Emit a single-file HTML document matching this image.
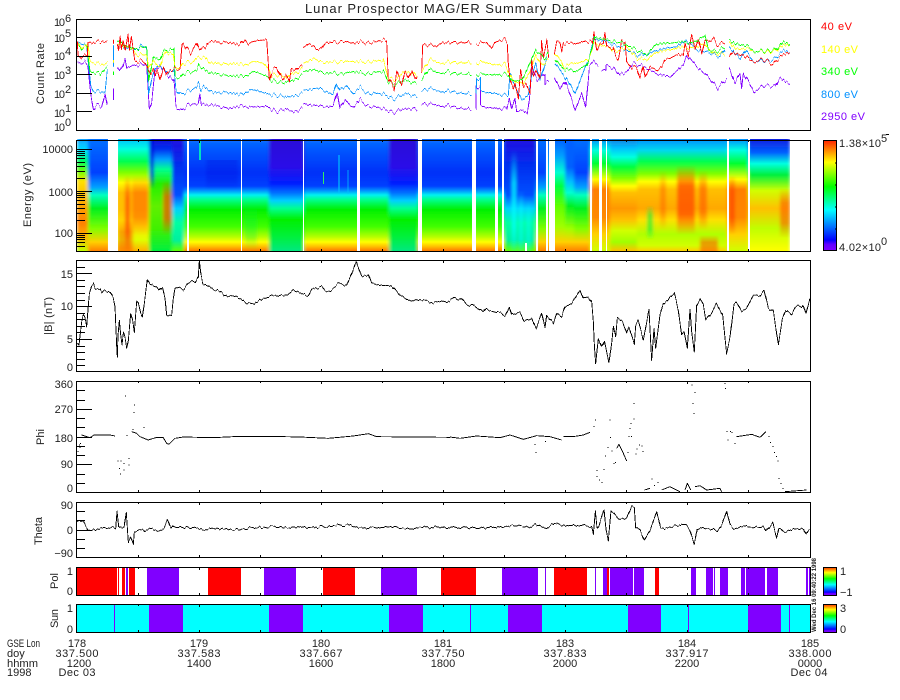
<!DOCTYPE html>
<html><head><meta charset="utf-8"><title>Lunar Prospector MAG/ER Summary Data</title>
<style>html,body{margin:0;padding:0;background:#fff;width:900px;height:700px;overflow:hidden}svg{display:block}text{font-family:"Liberation Sans",sans-serif;font-size:11px;fill:#222}.c{text-anchor:middle}.r{text-anchor:end}</style></head><body>
<svg width="900" height="700" viewBox="0 0 900 700" xmlns="http://www.w3.org/2000/svg">
<defs>
<linearGradient id="rb" x1="0" y1="1" x2="0" y2="0"><stop offset="0" stop-color="#8000ff"/><stop offset=".06" stop-color="#6000ff"/><stop offset=".1" stop-color="#0000ff"/><stop offset=".2" stop-color="#0060ff"/><stop offset=".37" stop-color="#00ffff"/><stop offset=".58" stop-color="#00ff00"/><stop offset=".8" stop-color="#ffff00"/><stop offset=".9" stop-color="#ff9000"/><stop offset="1" stop-color="#ff2000"/></linearGradient>
<linearGradient id="gA" x1="0" y1="0" x2="0" y2="1"><stop offset="0" stop-color="#0a70ff"/><stop offset=".09" stop-color="#0058ff"/><stop offset=".3" stop-color="#0030f8"/><stop offset=".42" stop-color="#0040ff"/><stop offset=".46" stop-color="#0090ff"/><stop offset=".5" stop-color="#00f0f0"/><stop offset=".54" stop-color="#00ff90"/><stop offset=".63" stop-color="#00f000"/><stop offset=".78" stop-color="#40ff00"/><stop offset=".87" stop-color="#b0ff00"/><stop offset=".92" stop-color="#ffff00"/><stop offset=".96" stop-color="#ffc000"/><stop offset="1" stop-color="#ff7800"/></linearGradient>
<linearGradient id="gB" x1="0" y1="0" x2="0" y2="1"><stop offset="0" stop-color="#2a10d8"/><stop offset=".25" stop-color="#2a10e8"/><stop offset=".4" stop-color="#0020ff"/><stop offset=".48" stop-color="#0070ff"/><stop offset=".55" stop-color="#00d0ff"/><stop offset=".62" stop-color="#00ff90"/><stop offset=".72" stop-color="#00f000"/><stop offset=".88" stop-color="#00f040"/><stop offset="1" stop-color="#00e880"/></linearGradient>
<linearGradient id="gL" x1="0" y1="0" x2="0" y2="1"><stop offset="0" stop-color="#10a0ff"/><stop offset=".1" stop-color="#00e0ff"/><stop offset=".2" stop-color="#00ff60"/><stop offset=".3" stop-color="#80ff00"/><stop offset=".38" stop-color="#ffe000"/><stop offset=".55" stop-color="#ffb000"/><stop offset=".75" stop-color="#ff8000"/><stop offset=".87" stop-color="#ffb000"/><stop offset="1" stop-color="#c0ff00"/></linearGradient>
<linearGradient id="gC" x1="0" y1="0" x2="0" y2="1"><stop offset="0" stop-color="#00c0ff"/><stop offset=".09" stop-color="#00ffe0"/><stop offset=".2" stop-color="#00ff50"/><stop offset=".3" stop-color="#80ff00"/><stop offset=".39" stop-color="#ffff00"/><stop offset=".48" stop-color="#ffc000"/><stop offset=".63" stop-color="#ffc000"/><stop offset=".78" stop-color="#ffe000"/><stop offset=".9" stop-color="#e0ff00"/><stop offset="1" stop-color="#ffb000"/></linearGradient>
<linearGradient id="gD" x1="0" y1="0" x2="0" y2="1"><stop offset="0" stop-color="#1410d8"/><stop offset=".09" stop-color="#0030f0"/><stop offset=".18" stop-color="#00a0ff"/><stop offset=".27" stop-color="#00ff90"/><stop offset=".4" stop-color="#20f000"/><stop offset=".6" stop-color="#60f000"/><stop offset=".8" stop-color="#40f000"/><stop offset="1" stop-color="#00f040"/></linearGradient>
<linearGradient id="gE1" x1="0" y1="0" x2="0" y2="1"><stop offset="0" stop-color="#1480e0"/><stop offset=".08" stop-color="#00c0ff"/><stop offset=".16" stop-color="#00ffe0"/><stop offset=".25" stop-color="#00ff40"/><stop offset=".35" stop-color="#80ff00"/><stop offset=".42" stop-color="#ffff00"/><stop offset=".48" stop-color="#ffc000"/><stop offset=".62" stop-color="#ff9800"/><stop offset=".72" stop-color="#ffc000"/><stop offset=".82" stop-color="#d0ff00"/><stop offset=".92" stop-color="#a0ff00"/><stop offset="1" stop-color="#ffc000"/></linearGradient>
<linearGradient id="gE2" x1="0" y1="0" x2="0" y2="1"><stop offset="0" stop-color="#0090ff"/><stop offset=".1" stop-color="#00d8f0"/><stop offset=".2" stop-color="#00ff50"/><stop offset=".31" stop-color="#80ff00"/><stop offset=".38" stop-color="#ffff00"/><stop offset=".45" stop-color="#ffc000"/><stop offset=".62" stop-color="#ffa800"/><stop offset=".72" stop-color="#ffe000"/><stop offset=".85" stop-color="#b0ff00"/><stop offset=".95" stop-color="#d0ff00"/><stop offset="1" stop-color="#ffd000"/></linearGradient>
<linearGradient id="gE3" x1="0" y1="0" x2="0" y2="1"><stop offset="0" stop-color="#0090ff"/><stop offset=".1" stop-color="#00ffe0"/><stop offset=".22" stop-color="#00ff30"/><stop offset=".36" stop-color="#ffff00"/><stop offset=".45" stop-color="#ff8000"/><stop offset=".7" stop-color="#ff8800"/><stop offset=".85" stop-color="#ffd000"/><stop offset="1" stop-color="#d0ff00"/></linearGradient>
<linearGradient id="gF" x1="0" y1="0" x2="0" y2="1"><stop offset="0" stop-color="#2010e0"/><stop offset=".25" stop-color="#0030f0"/><stop offset=".5" stop-color="#0050ff"/><stop offset=".62" stop-color="#00d0ff"/><stop offset=".75" stop-color="#00ffa0"/><stop offset=".9" stop-color="#00f0a0"/><stop offset="1" stop-color="#60ff00"/></linearGradient>
<linearGradient id="gG" x1="0" y1="0" x2="0" y2="1"><stop offset="0" stop-color="#0070ff"/><stop offset=".3" stop-color="#0040ff"/><stop offset=".43" stop-color="#00a0ff"/><stop offset=".5" stop-color="#00ffc0"/><stop offset=".62" stop-color="#00f020"/><stop offset=".8" stop-color="#80ff00"/><stop offset=".92" stop-color="#ffd000"/><stop offset="1" stop-color="#ff8000"/></linearGradient>
<linearGradient id="gJ" x1="0" y1="0" x2="0" y2="1"><stop offset="0" stop-color="#0060ff"/><stop offset=".15" stop-color="#00a0ff"/><stop offset=".3" stop-color="#00ffd0"/><stop offset=".42" stop-color="#00ff40"/><stop offset=".6" stop-color="#60ff00"/><stop offset=".78" stop-color="#a0ff00"/><stop offset=".92" stop-color="#ffd000"/><stop offset="1" stop-color="#ff8000"/></linearGradient>
<linearGradient id="gK" x1="0" y1="0" x2="0" y2="1"><stop offset="0" stop-color="#0060ff"/><stop offset=".25" stop-color="#0060ff"/><stop offset=".38" stop-color="#00c0ff"/><stop offset=".48" stop-color="#00ffd0"/><stop offset=".6" stop-color="#00f020"/><stop offset=".8" stop-color="#a0ff00"/><stop offset=".92" stop-color="#ffd000"/><stop offset="1" stop-color="#ff8000"/></linearGradient>
<linearGradient id="gH" x1="0" y1="0" x2="0" y2="1"><stop offset="0" stop-color="#1020e0"/><stop offset=".12" stop-color="#0060ff"/><stop offset=".22" stop-color="#00ffe0"/><stop offset=".32" stop-color="#00f040"/><stop offset=".46" stop-color="#d0ff00"/><stop offset=".62" stop-color="#ffc000"/><stop offset=".8" stop-color="#c0ff00"/><stop offset="1" stop-color="#ffff00"/></linearGradient>
<linearGradient id="oR" x1="0" y1="0" x2="0" y2="1"><stop offset="0" stop-color="#ff4000" stop-opacity="0"/><stop offset=".3" stop-color="#ff4800" stop-opacity=".75"/><stop offset=".7" stop-color="#ff4800" stop-opacity=".75"/><stop offset="1" stop-color="#ff4000" stop-opacity="0"/></linearGradient>
<linearGradient id="oC" x1="0" y1="0" x2="0" y2="1"><stop offset="0" stop-color="#00ffff" stop-opacity="0"/><stop offset=".3" stop-color="#00ffff" stop-opacity=".8"/><stop offset=".7" stop-color="#00ffff" stop-opacity=".8"/><stop offset="1" stop-color="#00ffff" stop-opacity="0"/></linearGradient>
<linearGradient id="oB" x1="0" y1="0" x2="0" y2="1"><stop offset="0" stop-color="#0010e0" stop-opacity=".9"/><stop offset=".7" stop-color="#0010e0" stop-opacity=".8"/><stop offset="1" stop-color="#0010e0" stop-opacity="0"/></linearGradient>
<linearGradient id="oG" x1="0" y1="0" x2="0" y2="1"><stop offset="0" stop-color="#00f040" stop-opacity="0"/><stop offset=".3" stop-color="#00f040" stop-opacity=".7"/><stop offset=".7" stop-color="#00f040" stop-opacity=".7"/><stop offset="1" stop-color="#00f040" stop-opacity="0"/></linearGradient>
<filter id="hb" x="-2%" y="-2%" width="104%" height="104%"><feGaussianBlur stdDeviation="1.6 0"/></filter>
<filter id="j1" filterUnits="userSpaceOnUse" x="0" y="0" width="900" height="700" color-interpolation-filters="sRGB"><feTurbulence type="fractalNoise" baseFrequency="0.3 0.0006" numOctaves="2" seed="7"/><feColorMatrix type="matrix" values="0 0 0 0 .5  0 1 0 0 0  0 0 0 0 0  0 0 0 0 1" result="n"/><feDisplacementMap in="SourceGraphic" in2="n" scale="9" xChannelSelector="R" yChannelSelector="G"/></filter>
<filter id="j2" filterUnits="userSpaceOnUse" x="0" y="0" width="900" height="700" color-interpolation-filters="sRGB"><feTurbulence type="fractalNoise" baseFrequency="0.35 0.0006" numOctaves="2" seed="3"/><feColorMatrix type="matrix" values="0 0 0 0 .5  0 1 0 0 0  0 0 0 0 0  0 0 0 0 1" result="n"/><feDisplacementMap in="SourceGraphic" in2="n" scale="5" xChannelSelector="R" yChannelSelector="G"/></filter>
<clipPath id="sc"><rect x="77" y="139" width="713" height="112"/></clipPath>
<path id="tt" d="M138.5,0v2M199.5,0v3M260.5,0v2M321.5,0v3M382.5,0v2M443.5,0v3M504.5,0v2M565.5,0v3M626.5,0v2M687.5,0v3M748.5,0v2" stroke="#000" fill="none" shape-rendering="crispEdges"/>
</defs>

<!-- Spectrogram -->
<g clip-path="url(#sc)"><g filter="url(#hb)">
<rect x="77" y="139" width="11" height="112" fill="url(#gL)"/>
<rect x="88" y="139" width="22" height="112" fill="url(#gG)"/>
<rect x="116" y="139" width="33" height="112" fill="url(#gC)"/>
<rect x="132" y="175" width="16" height="60" fill="url(#oR)" opacity=".6"/>
<rect x="125" y="175" width="5" height="80" fill="url(#oR)"/>
<rect x="118" y="220" width="15" height="40" fill="url(#oR)" opacity=".6"/>
<rect x="149" y="139" width="23" height="112" fill="url(#gD)"/>
<rect x="150" y="139" width="4" height="50" fill="url(#oB)"/>
<rect x="163" y="180" width="11" height="55" fill="url(#oR)" opacity=".9"/>
<rect x="172" y="139" width="12" height="112" fill="url(#gF)"/>
<rect x="184" y="139" width="85" height="112" fill="url(#gA)"/>
<rect x="206" y="160" width="32" height="30" fill="url(#oB)" opacity=".35"/>
<rect x="245" y="205" width="12" height="46" fill="url(#oG)" opacity=".4"/>
<rect x="269" y="139" width="35" height="112" fill="url(#gB)"/>
<rect x="304" y="139" width="85" height="112" fill="url(#gA)"/>
<rect x="389" y="139" width="29" height="112" fill="url(#gB)"/>
<rect x="418" y="139" width="86" height="112" fill="url(#gA)"/>
<rect x="478" y="139" width="17" height="112" fill="url(#gA)"/>
<rect x="504" y="139" width="32" height="112" fill="url(#gF)"/>
<rect x="512" y="150" width="4" height="110" fill="url(#oC)"/>
<rect x="519" y="190" width="4" height="70" fill="url(#oC)" opacity=".7"/>
<rect x="526" y="200" width="5" height="60" fill="url(#oC)" opacity=".6"/>
<rect x="536" y="139" width="12" height="112" fill="url(#gG)"/>
<rect x="548" y="139" width="17" height="112" fill="url(#gJ)"/>
<rect x="565" y="139" width="9" height="112" fill="url(#gK)"/>
<rect x="574" y="139" width="16" height="112" fill="url(#gG)"/>
<rect x="590" y="139" width="20" height="112" fill="url(#gE3)"/>
<rect x="610" y="139" width="27" height="112" fill="url(#gE1)"/>
<rect x="637" y="139" width="90" height="112" fill="url(#gE2)"/>
<rect x="660" y="170" width="6" height="60" fill="url(#oR)" opacity=".5"/>
<rect x="677" y="165" width="18" height="70" fill="url(#oR)"/>
<rect x="699" y="170" width="8" height="60" fill="url(#oR)" opacity=".7"/>
<rect x="700" y="235" width="18" height="25" fill="url(#oR)" opacity=".7"/>
<rect x="647" y="205" width="6" height="35" fill="url(#oG)" opacity=".8"/>
<rect x="727" y="139" width="21" height="112" fill="url(#gE3)"/>
<rect x="729" y="175" width="6" height="60" fill="url(#oR)"/>
<rect x="748" y="139" width="32" height="112" fill="url(#gH)"/>
<rect x="779" y="139" width="11" height="112" fill="url(#gH)"/>
<rect x="780" y="188" width="10" height="50" fill="url(#oR)" opacity=".7"/>
</g>
<rect x="199" y="139" width="2" height="21" fill="#00e0c0"/>
<rect x="323" y="172" width="1" height="12" fill="#30f060"/>
<rect x="338" y="155" width="2" height="38" fill="#00c0ff" opacity=".6"/>
<rect x="347" y="170" width="2" height="24" fill="#00c0ff" opacity=".4"/>
</g>
<g fill="#fff" shape-rendering="crispEdges">
<rect x="108" y="137" width="10" height="115"/><rect x="187" y="137" width="2" height="115"/><rect x="241" y="137" width="1" height="115"/><rect x="303" y="137" width="1" height="115"/><rect x="357" y="137" width="3" height="115"/><rect x="418" y="137" width="4" height="115"/><rect x="472" y="137" width="4" height="115"/><rect x="495" y="137" width="3" height="115"/><rect x="502" y="137" width="2" height="115"/><rect x="536" y="137" width="2" height="115"/><rect x="546" y="137" width="2" height="115"/><rect x="549" y="137" width="6" height="115"/><rect x="590" y="137" width="2" height="115"/><rect x="599" y="137" width="3" height="115"/><rect x="606" y="137" width="1" height="115"/><rect x="727" y="137" width="2" height="115"/><rect x="748" y="137" width="2" height="115"/><rect x="790" y="137" width="20" height="115"/><rect x="525" y="243" width="2" height="8"/>
</g>

<!-- Line data panel 1 -->
<g fill="none" stroke-width="2.7" shape-rendering="crispEdges" stroke-linejoin="round">
<g filter="url(#j1)">
<g transform="scale(.33333)">
<path stroke="#8000ff" d="M232,185L246,192L256,187L264,200L272,280L280,330L290,315L305,320L315,280L322,320M340,265v35M352,200L360,212L368,200L375,175L380,205L400,195L440,195L448,325L455,305L465,210L480,200L500,220L522,245L528,320L540,332L560,318L575,310L595,315L600,280L604,310L620,315L650,318L670,322L700,322L730,318L770,322L800,318L830,335L860,328L880,335L907,325M910,310L930,315L960,318L1000,320L1012,275L1020,325L1035,300L1050,315L1060,320L1080,298L1100,318L1150,325L1180,338L1210,328L1240,325L1252,333M1265,312L1290,312L1320,318L1350,318"/>
<path stroke="#0090ff" d="M232,125L260,140L272,255L280,275L315,275L322,215M340,135v65M352,130L380,145L400,150L425,138L440,145L446,280L455,235L465,205L480,195L495,215L522,215L528,270L540,282L560,275L590,262L596,250L602,270L610,258L640,280L680,275L725,285L750,268L800,280L860,292L907,280M910,270L960,265L1000,285L1010,250L1020,270L1040,258L1060,280L1080,260L1100,280L1150,280L1180,298L1220,280L1252,292M1265,272L1290,265L1320,275L1350,275"/>
<path stroke="#00ff00" d="M232,125L245,150L260,135L270,215L300,222L315,205L322,203M340,215v10M352,120L380,140L400,145L420,145L440,140L446,240L460,170L480,180L490,155L510,148L522,150L525,230L540,235L550,220L590,212L597,195L610,205L630,220L680,225L730,230L760,215L800,228L815,240L850,250L880,240L907,225M910,215L935,208L970,218L1030,222L1060,213L1100,222L1150,213L1165,245L1185,255L1215,240L1250,252M1265,240L1285,208L1320,220L1350,215"/>
<path stroke="#ffff00" d="M232,125L245,145L258,140L264,130L270,185L285,190L300,193L322,190M340,180v8M352,130L400,150L410,165L440,165L446,200L460,180L470,195L480,200L490,170L500,155L520,165L524,200L540,205L548,190L580,185L590,175L615,170L630,190L700,190L730,195L760,185L790,190L805,205L815,225L840,225L860,235L875,220L895,215L907,205M910,190L940,175L960,185L1000,187L1060,183L1100,187L1150,180L1165,235L1190,240L1210,215L1240,220L1252,232M1265,215L1290,178L1320,190L1350,187"/>
<path stroke="#ff0000" d="M232,125L234,165L244,175L250,168L262,168L264,125L275,130L285,125L300,127L310,122L322,127M340,118V130M352,130L356,150L360,110L364,150L370,120L376,150L384,105L388,150L394,110L400,150L404,180L410,185L425,182L440,195L446,210L452,220L460,205L466,225L472,210L480,240L490,205L497,225L505,210L515,215L525,205L540,210L546,135L550,128L560,145L572,160L580,145L590,130L597,150L605,140L615,145L625,127L640,125L660,128L680,125L700,130L720,135L735,120L745,130L760,125L780,122L800,118L804,175L808,240L815,215L825,205L830,200L840,225L848,240L858,225L868,245L874,205L885,210L895,200L907,200M910,143L925,130L940,138L950,150L965,145L975,127L1000,128L1030,125L1060,128L1085,125L1100,130L1130,125L1152,118L1160,125L1165,235L1175,250L1182,268L1190,215L1197,235L1205,255L1215,215L1225,235L1235,210L1245,240L1252,230M1265,215L1268,135L1290,135L1310,140L1328,125L1340,130L1350,130"/>
</g>
<g transform="translate(450,0) scale(.33333)">
<path stroke="#8000ff" d="M0,320L65,328M78,328L78,260L92,260V320L130,325L170,325L178,295L185,330L195,295L200,335L220,330L232,340L238,300L246,205L262,240L285,218V250L297,245M313,232L330,268L345,240L375,330L395,280L407,322L418,200L430,185L445,195M455,210H468V195L490,205L510,225L530,215L550,190L580,200L620,220L660,232L700,195L710,165L740,200L770,225L803,265L830,235M838,203L855,250L870,220L875,265L880,220L895,245L912,275L945,255L975,260L988,232L1020,253"/>
<path stroke="#0090ff" d="M0,275L65,282M78,282L80,232L92,238V275L165,285L175,285L180,220L190,250L215,300L235,285L245,230L258,190L270,240L290,175M315,190L345,230L375,280L395,230L420,165L432,115L470,125L530,150L560,165L590,165L620,150L680,140L710,120L740,150L770,155L810,170L825,145M838,140L870,178L885,150L910,185L970,180L1000,150L1020,160"/>
<path stroke="#ffff00" d="M0,187L65,187M78,187L110,188L130,195L165,192L175,215L190,245L220,250L240,215L258,165L275,195L295,180M313,160L335,185L340,200L370,190L400,185L420,170L432,130L470,140L500,155L530,140L560,175L590,180L620,155L660,150L700,140L730,145L760,130L790,160L825,160M838,125L860,150L885,145L900,150L920,155L970,155L1000,135L1020,135"/>
<path stroke="#ff0000" d="M0,128L30,127L65,128M78,130L110,128L125,145L135,128L150,120L165,118L172,130L175,190L180,240L190,270L195,250L205,295L212,210L220,260L228,250L240,280L245,180L250,230L260,210L270,235L275,125L280,170L290,122L296,175M313,160L320,125L330,128L335,155L340,128L360,130L380,130L400,125L420,122L427,130L432,100L440,150L450,130L460,130L465,98L470,140L490,145L497,170L505,180L515,125L525,125L530,185L545,205L560,200L570,235L580,200L585,232L600,200L620,210L635,200L645,180L660,175L680,165L700,165L705,130L715,165L725,105L735,150L745,115L755,160L765,120L775,125L790,115L800,135L815,130L825,125M838,170L845,155L860,165L880,165L900,180L915,185L930,180L950,180L970,195L980,180L995,165L1020,158"/>
<path stroke="#00ff00" d="M0,220L65,222M78,222L130,225L168,222L175,225L185,245L215,240L235,200L258,150L285,175L295,160M315,180L340,205L375,215L410,195L425,150L435,110L470,120L520,130L560,150L590,165L620,130L660,130L700,125L730,130L765,105L775,150L800,155L825,140M838,118L860,135L885,135L915,155L975,150L1000,125L1020,135"/>
</g>
</g>

<!-- B -->
<g stroke="#000">
<g filter="url(#j2)">
<path transform="translate(0,255) scale(.33333)" d="M232,265L237,270L240,240L245,200L250,180L255,190L260,215L265,150L268,115L275,90L280,85L285,100L300,105L305,115L312,108L330,110L340,130L345,155L350,270L352,305L354,240L358,195L362,240L366,270L370,235L375,250L380,280L385,255L392,175L398,195L403,230L410,140L415,145L422,175L427,187L435,130L442,75L450,90L470,95L480,105L488,97L495,130L500,185L515,180L520,130L525,98L535,97L550,105L565,85L575,75L585,85L595,65L598,15L602,55L608,85L620,90L640,105L660,108L680,125L700,120L720,130L740,145L760,148L785,132L810,123L860,120L880,105L900,115L925,122L935,102L965,95L975,105L990,110L1015,85L1030,88L1040,92L1055,55L1068,20L1085,65L1105,58L1115,85L1140,90L1175,95L1200,120L1225,135L1260,135L1290,140L1300,145L1320,140L1350,140"/>
<path transform="translate(450,255) scale(.33333)" d="M0,135L15,127L25,135L32,128L50,150L70,150L100,170L108,158L120,170L150,172L165,185L178,155L185,180L210,172L222,198L245,188L258,220L275,175L285,220L290,180L310,205L320,175L335,185L345,155L365,145L390,105L400,130L415,125L425,140L430,200L433,270L437,328L445,250L455,275L463,258L477,325L485,265L490,215L497,245L502,188L518,200L530,235L537,215L545,240L553,265L557,210L565,195L580,255L597,163L605,315L612,220L617,280L630,180L640,145L655,135L660,125L673,115L685,165L695,240L702,230L712,280L720,160L725,230L733,290L740,150L750,132L760,150L767,193L785,175L800,145L818,180L830,295L840,250L852,145L860,140L875,168L890,160L910,120L930,123L942,108L955,160L970,170L985,268L997,195L1007,165L1025,180L1035,160L1045,150L1055,160L1060,152L1068,178L1075,150L1080,130"/>
<!-- Theta -->
<path transform="translate(0,375) scale(.33333)" d="M232,440L240,435L250,440L262,463L300,463L340,455L347,462L351,408L356,455L365,460L372,462L379,413L385,500L392,485L400,507L403,470L430,465L435,472L450,463L480,468L492,460L503,435L512,460L520,452L530,457L580,457L605,465L650,460L700,463L750,460L810,455L870,457L930,457L990,453L1055,450L1075,460L1150,457L1190,457L1205,460L1300,457L1350,458"/>
<path transform="translate(450,375) scale(.33333)" d="M0,458L100,458L160,457L180,452L240,455L255,445L285,462L315,443L340,452L380,452L395,448L425,455L430,478L436,410L441,460L447,450L462,403L468,465L475,500L483,408L497,420L505,432L530,430L545,392L553,395L557,455L570,465L583,495L600,465L620,410L632,460L650,458L690,450L710,450L720,465L733,507L742,460L790,462L800,470L815,450L830,408L840,450L852,460L880,452L900,455L940,458L948,470L968,445L980,490L987,458L1000,472L1030,465L1060,463L1068,480L1078,463"/>
</g>
<!-- Phi -->
<path transform="translate(0,375) scale(.33333)" d="M245,180L270,188L282,180L330,180L345,183M395,170L410,175L420,185L445,195L470,187L490,188L500,205L507,208L525,190L550,186L640,188L700,185L850,185L900,186L985,190L1060,183L1105,176L1130,185L1350,187M232,230h3M237,210h3M240,205h3M238,218h3M375,63h3M402,90h3M400,112h3M397,163h3M430,157h3M352,258h3M362,258h3M370,265h3M385,250h3M385,270h3M370,285h3M360,297h3M357,280h3M380,182h3"/>
<path transform="translate(450,375) scale(.33333)" d="M0,186L30,190L80,183L150,188L180,180L220,193L260,182L300,185L335,195M340,185L375,184L400,180L420,172M430,155h3M435,135h3M253,208h3M256,232h3M285,200h3M440,287h3M440,305h3M447,315h3M455,322h3M460,283h3M465,243h3M472,218h3M478,135h3M480,187h3M485,228h3M500,220L507,208L520,235L530,258M490,265h3M495,262h3M532,232h3M535,185h3M543,185h3M538,160h3M542,145h3M550,132h3M550,85h3M557,237h3M560,222h3M567,210h3M575,213h3M578,230h3M583,345L600,340M605,312h3M612,332h3M622,322h3M635,345L660,335L690,350M705,345L712,325L722,345M735,335L750,332L770,345L810,340L815,350M725,30h3M733,52h3M727,85h3M730,115h3M823,25h3M825,40h3M830,170h3M840,170h3M845,172h3M832,195h3M853,205h3M860,185L880,182L905,178L930,187L948,170M955,185h3M960,203h3M968,215h3M972,232h3M978,245h3M982,258h3M985,310h3M992,325h3M998,340h3M1005,350L1070,345"/>
</g>
</g>

<!-- Pol -->
<g shape-rendering="crispEdges">
<g fill="#ff0000">
<rect x="77" y="567" width="40" height="28"/><rect x="118" y="567" width="1" height="28"/><rect x="122" y="567" width="3" height="28"/><rect x="129" y="567" width="6" height="28"/><rect x="208" y="567" width="33" height="28"/><rect x="323" y="567" width="32" height="28"/><rect x="441" y="567" width="35" height="28"/><rect x="554" y="567" width="33" height="28"/><rect x="607" y="567" width="2" height="28"/><rect x="655" y="567" width="4" height="28"/>
</g>
<g fill="#8000ff">
<rect x="126" y="567" width="2" height="28"/><rect x="147" y="567" width="32" height="28"/><rect x="264" y="567" width="32" height="28"/><rect x="381" y="567" width="36" height="28"/><rect x="502" y="567" width="36" height="28"/><rect x="545" y="567" width="1" height="28"/><rect x="595" y="567" width="1" height="28"/><rect x="603" y="567" width="4" height="28"/><rect x="610" y="567" width="23" height="28"/><rect x="634" y="567" width="10" height="28"/><rect x="691" y="567" width="5" height="28"/><rect x="706" y="567" width="7" height="28"/><rect x="714" y="567" width="1" height="28"/><rect x="720" y="567" width="8" height="28"/><rect x="741" y="567" width="4" height="28"/><rect x="746" y="567" width="19" height="28"/><rect x="767" y="567" width="11" height="28"/><rect x="806" y="567" width="2" height="28"/><rect x="809" y="567" width="1" height="28"/>
</g>
<rect x="77" y="604" width="733" height="28" fill="#00ffff"/>
<g fill="#8000ff">
<rect x="114" y="604" width="1" height="28"/><rect x="149" y="604" width="34" height="28"/><rect x="269" y="604" width="34" height="28"/><rect x="389" y="604" width="34" height="28"/><rect x="470" y="604" width="1" height="28"/><rect x="508" y="604" width="34" height="28"/><rect x="628" y="604" width="33" height="28"/><rect x="688" y="604" width="1" height="28"/><rect x="748" y="604" width="33" height="28"/><rect x="789" y="604" width="1" height="28"/>
</g>
<!-- Colourbars -->
<rect x="823" y="140" width="14" height="111" fill="url(#rb)"/>
<rect x="823" y="567" width="14" height="28" fill="url(#rb)"/>
<rect x="823" y="604" width="14" height="28" fill="url(#rb)"/>
<g fill="none" stroke="#000">
<rect x="823.5" y="140.5" width="13" height="110"/><rect x="823.5" y="567.5" width="13" height="28"/><rect x="823.5" y="604.5" width="13" height="28"/>
<path d="M837,163h-2M837,185h-2M837,207h-2M837,229h-2"/>
<!-- Frames -->
<rect x="76.5" y="19.5" width="734" height="111"/>
<rect x="76.5" y="140.5" width="734" height="111"/>
<rect x="76.5" y="260.5" width="734" height="111"/>
<rect x="76.5" y="381.5" width="734" height="111"/>
<rect x="76.5" y="502.5" width="734" height="55"/>
<rect x="76.5" y="567.5" width="734" height="28"/>
<rect x="76.5" y="604.5" width="734" height="28"/>
<!-- y ticks -->
<g id="yt">
<path d="M77,37.5h15M77,56.5h15M77,74.5h15M77,93.5h15M77,111.5h15"/>
<path d="M77,149.5h15M77,191.5h15M77,233.5h15M77,151.5h8M77,153.5h8M77,155.5h8M77,158.5h8M77,162.5h8M77,166.5h8M77,171.5h8M77,178.5h8M77,193.5h8M77,195.5h8M77,197.5h8M77,200.5h8M77,204.5h8M77,208.5h8M77,213.5h8M77,220.5h8M77,235.5h8M77,237.5h8M77,239.5h8M77,242.5h8M77,246.5h8"/>
<path d="M77,273.5h15M77,306.5h15M77,339.5h15M77,267.5h8M77,280.5h8M77,286.5h8M77,293.5h8M77,300.5h8M77,313.5h8M77,319.5h8M77,326.5h8M77,332.5h8M77,346.5h8M77,352.5h8M77,359.5h8M77,365.5h8"/>
<path d="M77,409.5h15M77,437.5h15M77,464.5h15M77,390.5h8M77,400.5h8M77,418.5h8M77,427.5h8M77,446.5h8M77,455.5h8M77,474.5h8M77,483.5h8"/>
<path d="M77,511.5h8M77,520.5h8M77,530.5h15M77,539.5h8M77,548.5h8"/>
</g>
</g>
<use href="#yt" transform="matrix(-1 0 0 1 887 0)"/>
<use href="#tt" y="19"/><use href="#tt" y="128"/><use href="#tt" y="140"/><use href="#tt" y="249"/><use href="#tt" y="260"/><use href="#tt" y="369"/><use href="#tt" y="381"/><use href="#tt" y="490"/><use href="#tt" y="502"/><use href="#tt" y="555"/><use href="#tt" y="567"/><use href="#tt" y="593"/><use href="#tt" y="604"/><use href="#tt" y="630"/>
<rect x="886" y="134" width="3" height="1" fill="#000"/>
</g>

<!-- Text -->
<text x="305" y="13" style="font-size:13px" textLength="277" lengthAdjust="spacing">Lunar Prospector MAG/ER Summary Data</text>
<g class="axl">
<text x="54" y="26" textLength="11">10</text><text x="65" y="22">6</text>
<text x="54" y="42" textLength="11">10</text><text x="65" y="37">5</text>
<text x="54" y="60" textLength="11">10</text><text x="65" y="55">4</text>
<text x="54" y="79" textLength="11">10</text><text x="65" y="74">3</text>
<text x="54" y="98" textLength="11">10</text><text x="65" y="93">2</text>
<text x="54" y="117" textLength="11">10</text><text x="65" y="112">1</text>
<text x="54" y="131" textLength="11">10</text><text x="65" y="126">0</text>
<text x="73" y="153" class="r">10000</text><text x="73" y="196" class="r">1000</text><text x="73" y="237" class="r">100</text>
<text x="73" y="278" class="r">15</text><text x="73" y="310" class="r">10</text><text x="73" y="343" class="r">5</text><text x="73" y="371" class="r">0</text>
<text x="73" y="388" class="r">360</text><text x="73" y="413" class="r">270</text><text x="73" y="442" class="r">180</text><text x="73" y="468" class="r">90</text><text x="73" y="492" class="r">0</text>
<text x="73" y="509" class="r">90</text><text x="73" y="534" class="r">0</text><text x="73" y="557" class="r">−90</text>
<text x="73" y="575" class="r">1</text><text x="73" y="595" class="r">0</text><text x="73" y="612" class="r">1</text><text x="73" y="633" class="r">0</text>
</g>
<text transform="translate(44,104) rotate(-90)" textLength="61">Count Rate</text>
<text transform="translate(31,227) rotate(-90)" textLength="64">Energy (eV)</text>
<text transform="translate(52,335) rotate(-90)" textLength="38">|B| (nT)</text>
<text transform="translate(44,445) rotate(-90)" textLength="16">Phi</text>
<text transform="translate(42,545) rotate(-90)" textLength="28">Theta</text>
<text transform="translate(58,589) rotate(-90)" textLength="16">Pol</text>
<text transform="translate(58,628) rotate(-90)" textLength="19">Sun</text>

<text x="821" y="30" style="fill:#ff0000" textLength="31">40 eV</text>
<text x="821" y="53" style="fill:#ffff00" textLength="37">140 eV</text>
<text x="821" y="75" style="fill:#00ff00" textLength="37">340 eV</text>
<text x="821" y="98" style="fill:#0090ff" textLength="37">800 eV</text>
<text x="821" y="120" style="fill:#8000ff" textLength="44">2950 eV</text>

<text x="839" y="147" textLength="42">1.38×10</text><text x="881" y="142">5</text>
<text x="839" y="251" textLength="42">4.02×10</text><text x="881" y="245">0</text>
<text x="840" y="575">1</text><text x="840" y="596">−1</text><text x="840" y="612">3</text><text x="840" y="633">0</text>

<text x="7" y="647" textLength="33" lengthAdjust="spacingAndGlyphs">GSE Lon</text><text x="7" y="657">doy</text><text x="7" y="667" textLength="31" lengthAdjust="spacingAndGlyphs">hhmm</text><text x="7" y="676">1998</text>
<text x="77" y="647" class="c">178</text><text x="77" y="657" class="c" textLength="43">337.500</text><text x="79" y="667" class="c">1200</text><text x="77" y="676" class="c" textLength="37">Dec 03</text>
<text x="199" y="647" class="c">179</text><text x="199" y="657" class="c" textLength="43">337.583</text><text x="199" y="667" class="c">1400</text>
<text x="321" y="647" class="c">180</text><text x="321" y="657" class="c" textLength="43">337.667</text><text x="321" y="667" class="c">1600</text>
<text x="443" y="647" class="c">181</text><text x="443" y="657" class="c" textLength="43">337.750</text><text x="443" y="667" class="c">1800</text>
<text x="565" y="647" class="c">183</text><text x="565" y="657" class="c" textLength="43">337.833</text><text x="565" y="667" class="c">2000</text>
<text x="687" y="647" class="c">184</text><text x="687" y="657" class="c" textLength="43">337.917</text><text x="687" y="667" class="c">2200</text>
<text x="810" y="647" class="c">185</text><text x="810" y="657" class="c" textLength="43">338.000</text><text x="810" y="667" class="c">0000</text><text x="809" y="676" class="c" textLength="37">Dec 04</text>

<text transform="translate(816,632) rotate(-90)" style="font-size:6px;font-weight:bold" textLength="74" lengthAdjust="spacingAndGlyphs">Wed Dec 16 09:40:22 1998</text>
</svg>
</body></html>
